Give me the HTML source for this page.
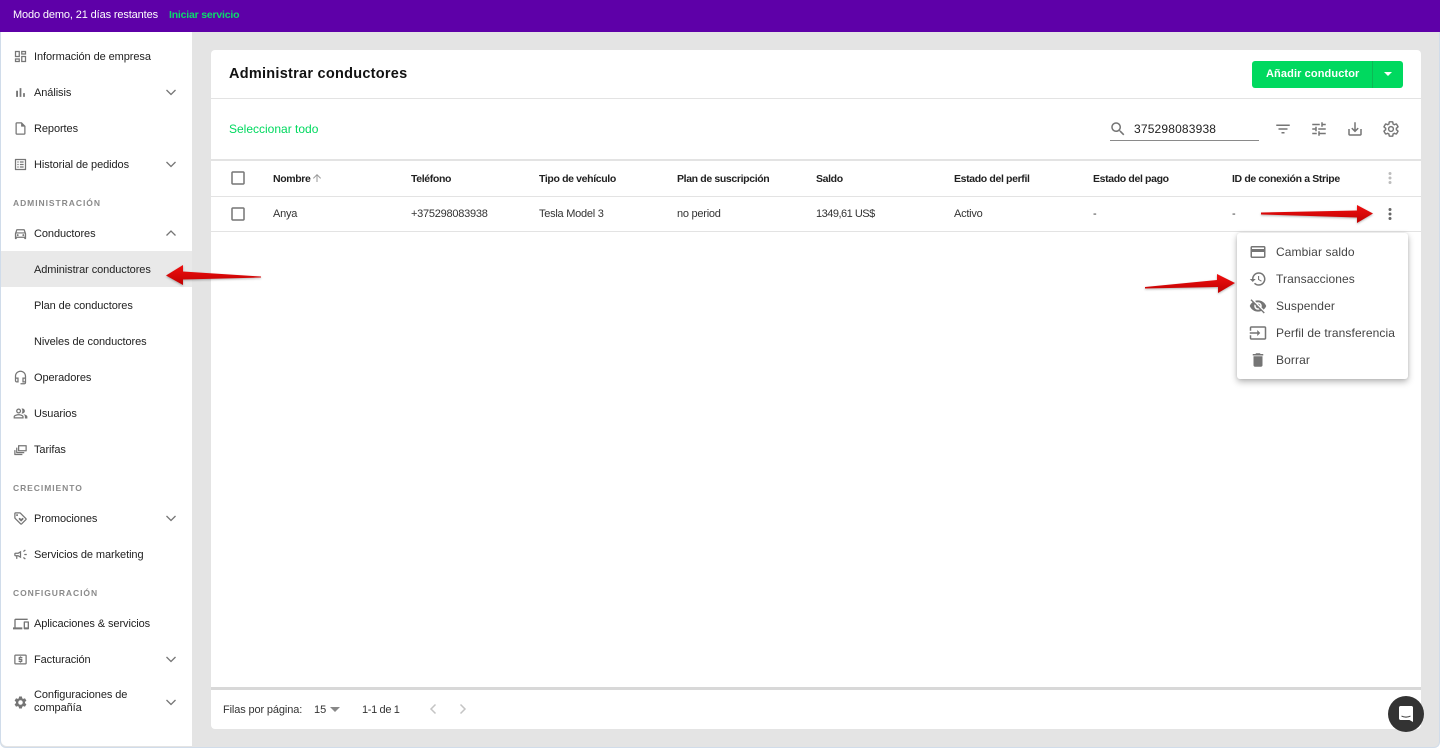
<!DOCTYPE html>
<html lang="es"><head><meta charset="utf-8"><title>Administrar conductores</title>
<style>
html,body{margin:0;padding:0;width:1440px;height:748px;overflow:hidden;background:#fff}
body{font-family:"Liberation Sans",sans-serif;font-size:11px;color:#222;position:relative}
#bg{position:absolute;left:0;top:0;width:1440px;height:748px;background:#e4e4e4;box-sizing:border-box;border:1px solid #d0dcea;border-top:0;border-radius:0 0 6px 6px}
.t{position:absolute;white-space:nowrap;line-height:14px}
.b{position:absolute}
svg.i{position:absolute;fill:#757575}
.s{font-weight:bold;font-size:8.5px;color:#8a8a8a;letter-spacing:.95px;left:13px}
.n{left:34px;letter-spacing:-.08px}
.h{font-weight:bold;font-size:10.5px;letter-spacing:-.36px;color:#222}
.c{letter-spacing:-.25px;color:#333}
.m{left:1276px;font-size:12px;letter-spacing:.1px;color:#444}
</style></head><body>
<div id="bg"></div>
<div class="b" style="left:0;top:0;width:1440px;height:32px;background:#5e00a8"></div>
<div class="t" style="left:13px;top:8px;color:#fff;letter-spacing:-.13px">Modo demo, 21 días restantes</div>
<div class="t" style="left:169px;top:8px;color:#0bdc6c;font-weight:bold;letter-spacing:-.2px;font-size:10.5px">Iniciar servicio</div>

<div class="b" style="left:1px;top:32px;width:191px;height:714px;background:#fff;border-radius:0 0 0 6px"></div>
<div class="b" style="left:1px;top:251px;width:191px;height:36px;background:#e9e9e9"></div>

<div class="t n" style="top:50px">Información de empresa</div>
<div class="t n" style="top:86px">Análisis</div>
<div class="t n" style="top:122px">Reportes</div>
<div class="t n" style="top:158px">Historial de pedidos</div>
<div class="t s" style="top:196px">ADMINISTRACIÓN</div>
<div class="t n" style="top:227px">Conductores</div>
<div class="t n" style="top:263px">Administrar conductores</div>
<div class="t n" style="top:299px">Plan de conductores</div>
<div class="t n" style="top:335px">Niveles de conductores</div>
<div class="t n" style="top:371px">Operadores</div>
<div class="t n" style="top:407px">Usuarios</div>
<div class="t n" style="top:443px">Tarifas</div>
<div class="t s" style="top:481px">CRECIMIENTO</div>
<div class="t n" style="top:512px">Promociones</div>
<div class="t n" style="top:548px">Servicios de marketing</div>
<div class="t s" style="top:586px">CONFIGURACIÓN</div>
<div class="t n" style="top:617px">Aplicaciones &amp; servicios</div>
<div class="t n" style="top:653px">Facturación</div>
<div class="t n" style="top:689px;line-height:13px;white-space:normal;width:110px">Configuraciones de compañía</div>

<svg class="i" style="left:13px;top:49px" width="15" height="15" viewBox="0 0 24 24"><path d="M19 5v2h-4V5h4M9 5v6H5V5h4m10 8v6h-4v-6h4M9 17v2H5v-2h4M21 3h-8v6h8V3zM11 3H3v10h8V3zm10 8h-8v10h8V11zm-10 4H3v6h8v-6z"/></svg>
<svg class="i" style="left:13px;top:85px" width="15" height="15" viewBox="0 0 24 24"><path d="M5 9.2h3V19H5zM10.6 5h2.8v14h-2.8zm5.6 8H19v6h-2.8z"/></svg>
<svg class="i" style="left:13px;top:121px" width="15" height="15" viewBox="0 0 24 24"><path d="M14 2H6c-1.1 0-1.99.9-1.99 2L4 20c0 1.1.89 2 1.99 2H18c1.1 0 2-.9 2-2V8l-6-6zM6 20V4h7v5h5v11H6z"/></svg>
<svg class="i" style="left:13px;top:157px" width="15" height="15" viewBox="0 0 24 24"><path d="M19 5v14H5V5h14m1.1-2H3.9c-.5 0-.9.4-.9.9v16.2c0 .4.4.9.9.9h16.2c.4 0 .9-.5.9-.9V3.9c0-.5-.5-.9-.9-.9zM11 7h6v2h-6V7zm0 4h6v2h-6v-2zm0 4h6v2h-6zM7 7h2v2H7zm0 4h2v2H7zm0 4h2v2H7z"/></svg>
<svg class="i" style="left:13px;top:226px" width="15" height="15" viewBox="0 0 24 24"><path d="M18.92 6.01C18.72 5.42 18.16 5 17.5 5h-11c-.66 0-1.21.42-1.42 1.01L3 12v8c0 .55.45 1 1 1h1c.55 0 1-.45 1-1v-1h12v1c0 .55.45 1 1 1h1c.55 0 1-.45 1-1v-8l-2.08-5.99zM6.85 7h10.29l1.08 3.11H5.77L6.85 7zM19 17H5v-5h14v5z"/><circle cx="7.5" cy="14.5" r="1.5"/><circle cx="16.5" cy="14.5" r="1.5"/></svg>
<svg class="i" style="left:13px;top:370px" width="15" height="15" viewBox="0 0 24 24"><path d="M12 1c-4.97 0-9 4.03-9 9v7c0 1.66 1.34 3 3 3h3v-8H5v-2c0-3.87 3.13-7 7-7s7 3.13 7 7v2h-4v8h4v1h-7v2h6c1.66 0 3-1.34 3-3V10c0-4.97-4.03-9-9-9zM7 14v4H6c-.55 0-1-.45-1-1v-3h2zm12 4h-2v-4h2v4z"/></svg>
<svg class="i" style="left:13px;top:406px" width="15" height="15" viewBox="0 0 24 24"><path d="M16.67 13.13C18.04 14.06 19 15.32 19 17v3h4v-3c0-2.18-3.57-3.47-6.33-3.87zM15 12c2.21 0 4-1.79 4-4s-1.79-4-4-4c-.47 0-.91.1-1.33.24C14.5 5.27 15 6.58 15 8s-.5 2.73-1.33 3.76c.42.14.86.24 1.33.24zM9 12c2.21 0 4-1.79 4-4s-1.79-4-4-4-4 1.79-4 4 1.79 4 4 4zm0-6c1.1 0 2 .9 2 2s-.9 2-2 2-2-.9-2-2 .9-2 2-2zM9 13c-2.67 0-8 1.34-8 4v3h16v-3c0-2.66-5.33-4-8-4zm6 5H3v-.99C3.2 16.29 6.3 15 9 15s5.8 1.29 6 2v1z"/></svg>
<svg class="i" style="left:13px;top:442px" width="15" height="15" viewBox="0 0 24 24"><path d="M9 5h12c.6 0 1 .4 1 1v8c0 .6-.4 1-1 1H9c-.6 0-1-.4-1-1V6c0-.6.4-1 1-1zm1 2v6h10V7H10zM5 9h2v7h11v2H6c-.6 0-1-.4-1-1V9zM2 13h2v6h11v2H3c-.6 0-1-.4-1-1v-7z"/></svg>
<svg class="i" style="left:13px;top:511px" width="15" height="15" viewBox="0 0 24 24"><path d="M21.41 11.58l-9-9C12.05 2.22 11.55 2 11 2H4c-1.1 0-2 .9-2 2v7c0 .55.22 1.05.59 1.42l9 9c.36.36.86.58 1.41.58s1.05-.22 1.41-.59l7-7c.37-.36.59-.86.59-1.41s-.23-1.06-.59-1.42zM13 20.01L4 11V4h7v-.01l9 8.99-7 7.02z"/><circle cx="6.5" cy="6.5" r="1.5"/><path d="M13 17l-3.5-3.5c-1.3-1.4.8-3.4 2.2-2l1.3 1.2 1.3-1.2c1.4-1.4 3.5.6 2.2 2z"/></svg>
<svg class="i" style="left:13px;top:547px" width="15" height="15" viewBox="0 0 24 24"><path d="M18 11v2h4v-2h-4zm-2 6.61c.96.71 2.21 1.65 3.2 2.39.4-.53.8-1.07 1.2-1.6-.99-.74-2.24-1.68-3.2-2.4-.4.54-.8 1.08-1.2 1.61zM20.4 5.6c-.4-.53-.8-1.07-1.2-1.6-.99.74-2.24 1.68-3.2 2.4.4.53.8 1.07 1.2 1.6.96-.72 2.21-1.65 3.2-2.4zM4 9c-1.1 0-2 .9-2 2v2c0 1.1.9 2 2 2h1v4h2v-4h1l5 3V6L8 9H4zm7 5.5L8.5 13H4v-2h4.5L11 9.5v5z"/></svg>
<svg class="i" style="left:13px;top:616px" width="16" height="16" viewBox="0 0 24 24"><path d="M4 6h18V4H4c-1.1 0-2 .9-2 2v11H0v3h14v-3H4V6zm19 2h-6c-.55 0-1 .45-1 1v10c0 .55.45 1 1 1h6c.55 0 1-.45 1-1V9c0-.55-.45-1-1-1zm-1 9h-4v-7h4v7z"/></svg>
<svg class="i" style="left:13px;top:652px" width="15" height="15" viewBox="0 0 24 24"><path d="M20 4H4c-1.1 0-2 .9-2 2v12c0 1.1.9 2 2 2h16c1.1 0 2-.9 2-2V6c0-1.1-.9-2-2-2zm0 14H4V6h16v12z"/><path d="M11 17v-1H9v-2h4v-1h-3c-.6 0-1-.4-1-1V9c0-.6.4-1 1-1h1V7h2v1h2v2h-4v1h3c.6 0 1 .4 1 1v3c0 .6-.4 1-1 1h-1v1z"/></svg>
<svg class="i" style="left:13px;top:695px" width="15" height="15" viewBox="0 0 24 24"><path d="M19.14 12.94c.04-.3.06-.61.06-.94 0-.32-.02-.64-.07-.94l2.03-1.58c.18-.14.23-.41.12-.61l-1.92-3.32c-.12-.22-.37-.29-.59-.22l-2.39.96c-.5-.38-1.03-.7-1.62-.94l-.36-2.54c-.04-.24-.24-.41-.48-.41h-3.84c-.24 0-.43.17-.47.41l-.36 2.54c-.59.24-1.13.57-1.62.94l-2.39-.96c-.22-.08-.47 0-.59.22L2.74 8.87c-.12.21-.08.47.12.61l2.03 1.58c-.05.3-.09.63-.09.94s.02.64.07.94l-2.03 1.58c-.18.14-.23.41-.12.61l1.92 3.32c.12.22.37.29.59.22l2.39-.96c.5.38 1.03.7 1.62.94l.36 2.54c.05.24.24.41.48.41h3.84c.24 0 .44-.17.47-.41l.36-2.54c.59-.24 1.13-.56 1.62-.94l2.39.96c.22.08.47 0 .59-.22l1.92-3.32c.12-.22.07-.47-.12-.61l-2.01-1.58zM12 15.6c-1.98 0-3.6-1.62-3.6-3.6s1.62-3.6 3.6-3.6 3.6 1.62 3.6 3.6-1.62 3.6-3.6 3.6z"/></svg>

<svg class="i" style="left:164px;top:85px;fill:none;stroke:#757575;stroke-width:1.3" width="14" height="14" viewBox="0 0 14 14"><path d="M2.5 5l4.5 4.5 4.5-4.500"/></svg>
<svg class="i" style="left:164px;top:157px;fill:none;stroke:#757575;stroke-width:1.3" width="14" height="14" viewBox="0 0 14 14"><path d="M2.5 5l4.5 4.5 4.5-4.500"/></svg>
<svg class="i" style="left:164px;top:226px;fill:none;stroke:#757575;stroke-width:1.3" width="14" height="14" viewBox="0 0 14 14"><path d="M2.5 9.500l4.500-4.500 4.500 4.500"/></svg>
<svg class="i" style="left:164px;top:511px;fill:none;stroke:#757575;stroke-width:1.3" width="14" height="14" viewBox="0 0 14 14"><path d="M2.5 5l4.5 4.5 4.5-4.500"/></svg>
<svg class="i" style="left:164px;top:652px;fill:none;stroke:#757575;stroke-width:1.3" width="14" height="14" viewBox="0 0 14 14"><path d="M2.5 5l4.5 4.5 4.5-4.500"/></svg>
<svg class="i" style="left:164px;top:695px;fill:none;stroke:#757575;stroke-width:1.3" width="14" height="14" viewBox="0 0 14 14"><path d="M2.5 5l4.5 4.5 4.5-4.500"/></svg>

<div class="b" style="left:211px;top:50px;width:1210px;height:679px;background:#fff;border-radius:4px"></div>
<div class="t" style="left:229px;top:67px;font-size:14.5px;font-weight:bold;letter-spacing:.26px;color:#111">Administrar conductores</div>
<div class="b" style="left:1252px;top:61px;width:151px;height:27px;background:#00d95f;border-radius:3px"></div>
<div class="b" style="left:1372px;top:61px;width:1px;height:27px;background:#0cb955"></div>
<div class="t" style="left:1266px;top:67px;color:#fff;font-weight:bold;font-size:11px;letter-spacing:.11px">Añadir conductor</div>
<svg class="i" style="left:1383px;top:71px;fill:#fff" width="10" height="6" viewBox="0 0 10 6"><path d="M1 1h8L5 5z"/></svg>
<div class="b" style="left:211px;top:98px;width:1210px;height:1px;background:#e3e3e3"></div>
<div class="t" style="left:229px;top:122px;color:#00d95f;font-size:12px;letter-spacing:0">Seleccionar todo</div>

<svg class="i" style="left:1109px;top:120px" width="18" height="18" viewBox="0 0 24 24"><path d="M15.500 14h-.79l-.28-.27C15.410 12.590 16 11.110 16 9.500 16 5.910 13.090 3 9.500 3S3 5.910 3 9.500 5.910 16 9.500 16c1.610 0 3.090-.59 4.230-1.570l.27.28v.79l5 4.990L20.490 19l-4.990-5zm-6 0C7.010 14 5 11.990 5 9.500S7.010 5 9.500 5 14 7.010 14 9.500 11.990 14 9.500 14z"/></svg>
<div class="t" style="left:1134px;top:122px;font-size:12px;letter-spacing:.17px;color:#222">375298083938</div>
<div class="b" style="left:1110px;top:140px;width:149px;height:1px;background:#8a8a8a"></div>
<svg class="i" style="left:1274px;top:120px" width="18" height="18" viewBox="0 0 24 24"><path d="M10 18h4v-2h-4v2zM3 6v2h18V6H3zm3 7h12v-2H6v2z"/></svg>
<svg class="i" style="left:1310px;top:120px" width="18" height="18" viewBox="0 0 24 24"><path d="M3 17v2h6v-2H3zM3 5v2h10V5H3zm10 16v-2h8v-2h-8v-2h-2v6h2zM7 9v2H3v2h4v2h2V9H7zm14 4v-2H11v2h10zm-6-4h2V7h4V5h-4V3h-2v6z"/></svg>
<svg class="i" style="left:1346px;top:120px" width="18" height="18" viewBox="0 0 24 24"><path d="M19 12v7H5v-7H3v7c0 1.100.9 2 2 2h14c1.100 0 2-.9 2-2v-7h-2zm-6 .67l2.590-2.580L17 11.500l-5 5-5-5 1.410-1.410L11 12.670V3h2z"/></svg>
<svg class="i" style="left:1382px;top:120px;fill:none;stroke:#757575;stroke-width:1.900" width="18" height="18" viewBox="0 0 24 24"><path d="M19.140 12.940c.04-.3.06-.61.06-.94 0-.32-.02-.64-.07-.94l2.030-1.580c.18-.14.23-.41.12-.61l-1.920-3.320c-.12-.22-.37-.29-.59-.22l-2.390.96c-.5-.38-1.030-.7-1.620-.94l-.36-2.540c-.04-.24-.24-.41-.48-.41h-3.840c-.24 0-.43.17-.47.41l-.36 2.540c-.59.24-1.130.57-1.620.94l-2.390-.96c-.22-.08-.47 0-.59.22L2.740 8.870c-.12.21-.08.47.12.61l2.030 1.580c-.05.3-.09.63-.09.94s.02.64.07.94l-2.030 1.580c-.18.14-.23.41-.12.61l1.920 3.320c.12.22.37.29.59.22l2.390-.96c.5.38 1.030.7 1.620.94l.36 2.54c.05.24.24.41.48.41h3.840c.24 0 .44-.17.47-.41l.36-2.540c.59-.24 1.130-.56 1.620-.94l2.390.96c.22.08.47 0 .59-.22l1.920-3.320c.12-.22.07-.47-.12-.61l-2.010-1.580z"/><circle cx="12" cy="12" r="3.200"/></svg>

<div class="b" style="left:211px;top:159px;width:1210px;height:2px;background:#e3e3e3"></div>
<div class="b" style="left:211px;top:196px;width:1210px;height:1px;background:#e3e3e3"></div>
<div class="b" style="left:211px;top:231px;width:1210px;height:1px;background:#e3e3e3"></div>

<svg class="i" style="left:229px;top:169px" width="18" height="18" viewBox="0 0 24 24"><path d="M19 5v14H5V5h14m0-2H5c-1.100 0-2 .9-2 2v14c0 1.100.9 2 2 2h14c1.100 0 2-.9 2-2V5c0-1.100-.9-2-2-2z"/></svg>
<svg class="i" style="left:229px;top:205px" width="18" height="18" viewBox="0 0 24 24"><path d="M19 5v14H5V5h14m0-2H5c-1.100 0-2 .9-2 2v14c0 1.100.9 2 2 2h14c1.100 0 2-.9 2-2V5c0-1.100-.9-2-2-2z"/></svg>

<div class="t h" style="left:273px;top:172px">Nombre</div>
<svg class="i" style="left:311px;top:172px;fill:#9a9a9a" width="12" height="12" viewBox="0 0 24 24"><path d="M4 12l1.410 1.410L11 7.830V20h2V7.830l5.580 5.590L20 12l-8-8-8 8z"/></svg>
<div class="t h" style="left:411px;top:172px">Teléfono</div>
<div class="t h" style="left:539px;top:172px">Tipo de vehículo</div>
<div class="t h" style="left:677px;top:172px">Plan de suscripción</div>
<div class="t h" style="left:816px;top:172px">Saldo</div>
<div class="t h" style="left:954px;top:172px">Estado del perfil</div>
<div class="t h" style="left:1093px;top:172px">Estado del pago</div>
<div class="t h" style="left:1232px;top:172px">ID de conexión a Stripe</div>
<svg class="i" style="left:1381px;top:169px;fill:#bdbdbd" width="18" height="18" viewBox="0 0 24 24"><circle cx="12" cy="6" r="2"/><circle cx="12" cy="12" r="2"/><circle cx="12" cy="18" r="2"/></svg>

<div class="t c" style="left:273px;top:207px">Anya</div>
<div class="t c" style="left:411px;top:207px">+375298083938</div>
<div class="t c" style="left:539px;top:207px">Tesla Model 3</div>
<div class="t c" style="left:677px;top:207px">no period</div>
<div class="t c" style="left:816px;top:207px;letter-spacing:-.5px">1349,61 US$</div>
<div class="t c" style="left:954px;top:207px">Activo</div>
<div class="t c" style="left:1093px;top:207px">-</div>
<div class="t c" style="left:1232px;top:207px">-</div>
<svg class="i" style="left:1381px;top:205px;fill:#666" width="18" height="18" viewBox="0 0 24 24"><circle cx="12" cy="6" r="2"/><circle cx="12" cy="12" r="2"/><circle cx="12" cy="18" r="2"/></svg>

<div class="b" style="left:1237px;top:233px;width:171px;height:146px;background:#fff;border-radius:3px;box-shadow:0 3px 7px rgba(0,0,0,.28),0 0 3px rgba(0,0,0,.1)"></div>
<div class="t m" style="top:245px">Cambiar saldo</div>
<div class="t m" style="top:272px">Transacciones</div>
<div class="t m" style="top:299px">Suspender</div>
<div class="t m" style="top:326px">Perfil de transferencia</div>
<div class="t m" style="top:353px">Borrar</div>
<svg class="i" style="left:1249px;top:243px" width="18" height="18" viewBox="0 0 24 24"><path d="M20 4H4c-1.110 0-1.990.89-1.990 2L2 18c0 1.110.89 2 2 2h16c1.110 0 2-.89 2-2V6c0-1.110-.89-2-2-2zm0 14H4v-6h16v6zm0-10H4V6h16v2z"/></svg>
<svg class="i" style="left:1249px;top:270px" width="18" height="18" viewBox="0 0 24 24"><path d="M13 3c-4.970 0-9 4.030-9 9H1l3.890 3.890.07.14L9 12H6c0-3.870 3.130-7 7-7s7 3.130 7 7-3.130 7-7 7c-1.930 0-3.680-.79-4.940-2.060l-1.420 1.420C8.270 19.990 10.510 21 13 21c4.970 0 9-4.030 9-9s-4.030-9-9-9zm-1 5v5l4.280 2.540.72-1.210-3.500-2.080V8H12z"/></svg>
<svg class="i" style="left:1249px;top:297px" width="18" height="18" viewBox="0 0 24 24"><path d="M12 7c2.760 0 5 2.240 5 5 0 .65-.13 1.260-.36 1.830l2.920 2.920c1.510-1.260 2.700-2.890 3.430-4.750-1.730-4.390-6-7.500-11-7.500-1.400 0-2.740.25-3.980.7l2.160 2.160C10.740 7.130 11.350 7 12 7zM2 4.270l2.280 2.280.46.46C3.080 8.300 1.780 10.020 1 12c1.730 4.390 6 7.500 11 7.500 1.550 0 3.030-.3 4.380-.84l.42.42L19.730 22 21 20.730 3.270 3 2 4.270zM7.530 9.800l1.550 1.550c-.05.21-.08.43-.08.65 0 1.660 1.340 3 3 3 .22 0 .44-.03.65-.08l1.550 1.550c-.67.33-1.410.53-2.200.53-2.760 0-5-2.240-5-5 0-.79.2-1.530.53-2.200zm4.310-.78l3.150 3.150.02-.16c0-1.660-1.340-3-3-3l-.17.01z"/></svg>
<svg class="i" style="left:1249px;top:324px" width="18" height="18" viewBox="0 0 24 24"><path d="M21 3.010H3c-1.100 0-2 .9-2 2V9h2V4.990h18v14.030H3V15H1v4.010c0 1.100.9 1.980 2 1.980h18c1.100 0 2-.88 2-1.980v-14c0-1.110-.9-2-2-2zM11 16l4-4-4-4v3H1v2h10v3z"/></svg>
<svg class="i" style="left:1249px;top:351px" width="18" height="18" viewBox="0 0 24 24"><path d="M6 19c0 1.100.9 2 2 2h8c1.100 0 2-.9 2-2V7H6v12zM19 4h-3.500l-1-1h-5l-1 1H5v2h14V4z"/></svg>

<div class="b" style="left:211px;top:687px;width:1210px;height:3px;background:#d8d8d8"></div>
<div class="t" style="left:223px;top:703px;color:#333;letter-spacing:-.13px">Filas por página:</div>
<div class="t" style="left:314px;top:703px;color:#333">15</div>
<svg class="i" style="left:330px;top:707px;fill:#888" width="10" height="5" viewBox="0 0 10 5"><path d="M0 0h10L5 5z"/></svg>
<div class="t" style="left:362px;top:703px;color:#333;letter-spacing:-.35px">1-1 de 1</div>
<svg class="i" style="left:426px;top:702px;fill:none;stroke:#c4c4c4;stroke-width:1.500" width="14" height="14" viewBox="0 0 14 14"><path d="M9.500 2.500L5 7l4.500 4.500"/></svg>
<svg class="i" style="left:456px;top:702px;fill:none;stroke:#c4c4c4;stroke-width:1.500" width="14" height="14" viewBox="0 0 14 14"><path d="M4.500 2.500L9 7l-4.500 4.500"/></svg>

<svg class="b" style="left:0;top:0;pointer-events:none;filter:drop-shadow(0 1px 1px rgba(0,0,0,.3))" width="1440" height="748" viewBox="0 0 1440 748">
<defs>
<linearGradient id="a" x1="0" y1="0" x2="0" y2="1"><stop offset="0" stop-color="#f01010"/><stop offset="1" stop-color="#c00000"/></linearGradient>
</defs>
<path d="M261 276.500L183 271.500L183 265L166 275.500L183 285L183 279.500L261 277.500Z" fill="url(#a)"/>
<path d="M1261 212.500L1357 210.500L1357 205L1373 213.500L1357 223L1357 217.500L1261 214.500Z" fill="url(#a)"/>
<path d="M1145 287L1217 280L1217 274L1235 283L1218 293L1218 287L1145 288.500Z" fill="url(#a)"/>
</svg>

<div class="b" style="left:1388px;top:696px;width:36px;height:36px;border-radius:50%;background:#333"></div>
<svg class="i" style="left:1398px;top:705px" width="16" height="18" viewBox="0 0 16 18"><path d="M1 2.500C1 1.700 1.700 1 2.500 1h11c.8 0 1.500.7 1.500 1.500V17l-3.500-2H2.500C1.700 15 1 14.300 1 13.500z" fill="#fff"/><path d="M3.500 11c2.500 1.500 6.500 1.500 9 0" fill="none" stroke="#333" stroke-width="1"/></svg>
</body></html>
